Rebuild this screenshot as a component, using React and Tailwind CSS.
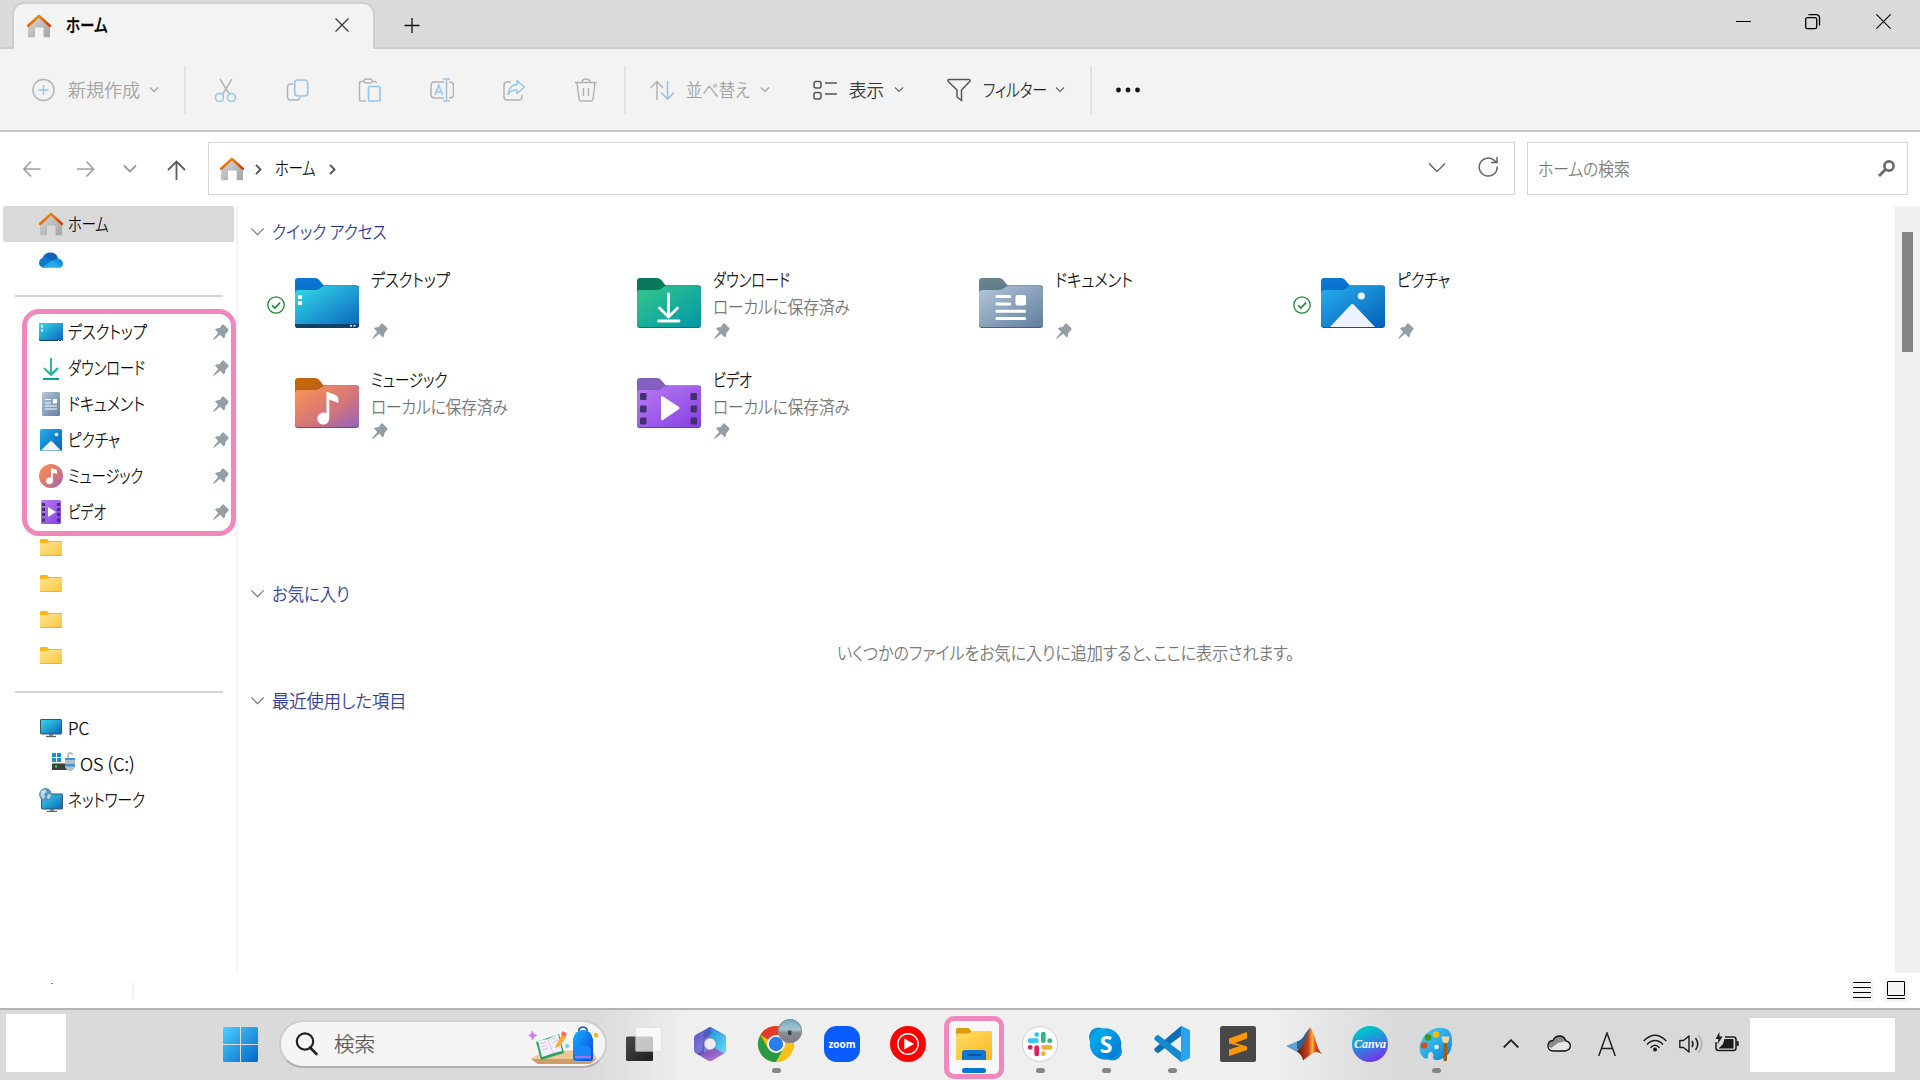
import React, { useLayoutEffect, useRef, useState } from "react";

const FONT = "font-['Noto_Sans_CJK_JP','Noto_Sans',sans-serif]";

/* Text condensed to a given width, as UI fonts with narrow kana are. */
function T({ children, w, className = "" }) {
  const ref = useRef(null);
  const [k, setK] = useState(1);
  useLayoutEffect(() => {
    const fit = () => ref.current && setK(w / ref.current.offsetWidth);
    fit();
    document.fonts?.ready.then(fit);
  }, [w]);
  return (
    <span className={`inline-block shrink-0 whitespace-nowrap text-left [-webkit-text-stroke:0.25px_currentColor] ${className}`} style={{ width: w }}>
      <span ref={ref} className="inline-block origin-left [font-feature-settings:'palt']" style={{ transform: `scaleX(${k})` }}>
        {children}
      </span>
    </span>
  );
}

function Svg({ w, h = w, vb, className = "", children }) {
  return (
    <svg width={w} height={h} viewBox={vb || `0 0 ${w} ${h}`} fill="none" className={`block shrink-0 ${className}`}>
      {children}
    </svg>
  );
}

function Gradients() {
  const list = [
    ["gHome", "#d9d9d9", "#a3a3a3"], ["gRoof", "#f39a12", "#d83b01"],
    ["gDesk", "#35dcea", "#0a63bd"], ["gDown", "#34c98b", "#0096a8"],
    ["gDoc", "#b4c6da", "#617f9f"], ["gPic", "#26aeee", "#0560b6"],
    ["gVid", "#b87cf6", "#8540e0"],
    ["gYel", "#ffe596", "#fcc73a"], ["gYel2", "#ffdc63", "#fdbb22"],
    ["gWin", "#4fd0ff", "#0067c8"], ["gBag", "#18b4ff", "#0a3fdc"],
    ["gTabBlue", "#0a7bd8", "#0564bb"], ["gTabBrown", "#cb6808", "#aa5a20"],
    ["gTabSlate", "#6a8791", "#4e6d78"], ["gSkype", "#00b7f0", "#0072d4"],
    ["gPaint", "#4fd4f8", "#0880d4"], ["gDark", "#4a4a4a", "#1d1d1d"],
    ["gOffR", "#1d7fd0", "#5fe0fa"], ["gOffL", "#5a55c4", "#a69af0"], ["gOffB", "#6a48a4", "#c07ee4"],
  ];
  return (
    <svg width="0" height="0" className="absolute">
      <defs>
        {list.map(([id, a, b]) => (
          <linearGradient key={id} id={id} x1="0" y1="0" x2="1" y2="1">
            <stop stopColor={a} />
            <stop offset="1" stopColor={b} />
          </linearGradient>
        ))}
        <linearGradient id="gMus" x1="0" y1="0" x2="1" y2="1">
          <stop stopColor="#ff9350" />
          <stop offset=".6" stopColor="#d2747c" />
          <stop offset="1" stopColor="#9064bc" />
        </linearGradient>
        <linearGradient id="gCanva" x1=".3" y1="0" x2=".7" y2="1">
          <stop offset=".1" stopColor="#00c4cc" />
          <stop offset=".5" stopColor="#2c87dc" />
          <stop offset="1" stopColor="#7d2ae8" />
        </linearGradient>
        <linearGradient id="gPhoto" x1="0" y1="0" x2="0" y2="1">
          <stop stopColor="#6ba6c8" />
          <stop offset=".45" stopColor="#a9c2cc" />
          <stop offset=".55" stopColor="#8a8f92" />
          <stop offset="1" stopColor="#777b80" />
        </linearGradient>
        <linearGradient id="gMat" x1="0" y1="0" x2="1" y2="0">
          <stop stopColor="#5c1a12" />
          <stop offset=".45" stopColor="#c8401a" />
          <stop offset=".62" stopColor="#ffb03a" />
          <stop offset=".75" stopColor="#d8481e" />
          <stop offset="1" stopColor="#b02418" />
        </linearGradient>
      </defs>
    </svg>
  );
}

const Home = ({ className = "" }) => (
  <Svg w={24} className={className}>
    <path d="M1 11.5 12 1.5 23 11.5V22.6Q23 23.3 22 23.3H16.6V14.5Q16.6 13.4 15.5 13.4H9.2Q8 13.4 8 14.5V23.3H2Q1 23.3 1 22.6Z" fill="url(#gHome)" />
    <path d="M1.2 11.8 12 1.9 22.8 11.8" stroke="url(#gRoof)" strokeWidth="2.6" strokeLinecap="round" strokeLinejoin="round" />
  </Svg>
);

const Chev = ({ w = 8, h = 5, sw = 1.2, className = "" }) => (
  <Svg w={w} h={h} vb="0 0 16 9" className={`overflow-visible ${className}`}>
    <path d="M0 .5 8 8.5 16 .5" stroke="currentColor" strokeWidth={sw} vectorEffect="non-scaling-stroke" />
  </Svg>
);

const Pin = () => (
  <Svg w={16} className="text-[#939ea5]">
    <path d="M9.3.5Q10 0 10.8.7L15.3 5.1Q16 6 15.3 6.6L14 8.2 12.4 10 12 13 10.8 14.6 7.2 10.8 1 15.8 0 15.2 5.2 8.9 2 5.6 3.4 4.5 6.8 3.9Z" fill="currentColor" />
  </Svg>
);

const Check = () => (
  <Svg w={18}>
    <circle cx="9" cy="9" r="8.2" stroke="#1d8a35" strokeWidth="1.3" />
    <path d="m5 9.2 2.8 2.8 5.3-5.4" stroke="#1d8a35" strokeWidth="1.6" />
  </Svg>
);

const Note = () => <path d="M31.5 13.5 40.5 17Q43.3 18 43.3 20.5V25L34.3 21.5V40.5A6 6 0 1 1 31.5 35.5Z" fill="#fff" />;

/* 64x50 folder: a tinted tab behind a gradient face */
function BigFolder({ kind }) {
  const face = { desk: "gDesk", down: "gDown", doc: "gDoc", pic: "gPic", music: "gMus", video: "gVid" }[kind];
  const tab = { desk: "url(#gTabBlue)", down: "#087a5b", doc: "url(#gTabSlate)", pic: "url(#gTabBlue)", music: "url(#gTabBrown)", video: "#8360bd" }[kind];
  const foot = { desk: "#0b4266", down: "#08716b", doc: "#4b627c", pic: "#0650a0", music: "#704b79", video: "#6a39b0" }[kind];
  return (
    <Svg w={64} h={50}>
      <path d="M0 3Q0 0 3 0H20Q22.5 0 24 1.8L28.5 7.2H61Q64 7.2 64 10V20H0Z" fill={tab} />
      <path d="M0 15Q0 12 3 12H20Q23 12 25 10.3L27 8.8Q28 8 30 8H61Q64 8 64 11V47Q64 50 61 50H3Q0 50 0 47Z" fill={foot} />
      <path d="M0 15Q0 12 3 12H20Q23 12 25 10.3L27 8.8Q28 8 30 8H61Q64 8 64 11V46Q64 49 61 49H3Q0 49 0 46Z" fill={`url(#${face})`} />
      {kind === "desk" && (
        <>
          <path d="M0 46H64V47Q64 50 61 50H3Q0 50 0 47Z" fill="#0b4266" />
          <path d="M3 17h4v4H3zM3 23h4v4H3zM55 47h2v1.5h-2zM58.500 47h2v1.5h-2z" fill="#fff" />
        </>
      )}
      {kind === "down" && <path d="M31.500 16V39M22.500 30 31.500 39 40.500 30M21.500 43H42" stroke="#fff" strokeWidth="2.8" strokeLinecap="round" strokeLinejoin="round" />}
      {kind === "doc" && (
        <g fill="#fff">
          <rect x="16.500" y="17" width="15.500" height="3" rx="1" /><rect x="16.500" y="24.500" width="15.500" height="3" rx="1" />
          <rect x="36.500" y="17" width="10.500" height="10.500" rx="2" />
          <rect x="16.500" y="31.700" width="30.500" height="3" rx="1" /><rect x="16.500" y="39" width="30.500" height="3" rx="1" />
        </g>
      )}
      {kind === "pic" && (
        <>
          <circle cx="40.300" cy="18" r="3.600" fill="#eaf5fb" />
          <path d="M9 49 29.500 27Q31.300 25 33.100 27L54 49Z" fill="#edf2ff" />
        </>
      )}
      {kind === "music" && <Note />}
      {kind === "video" && (
        <>
          {[15, 27.500, 39.500].map((y) => (
            <g key={y} fill="#43306f">
              <rect x="3" y={y} width="6.500" height="7" rx="1.300" /><rect x="53.500" y={y} width="6.500" height="7" rx="1.300" />
            </g>
          ))}
          <path d="M24 19.500Q24 17 26 18.500L42 29Q43.300 30 42 31L26 42Q24 43 24 41Z" fill="#fff" />
        </>
      )}
    </Svg>
  );
}

const SMALL = {
  home: <Home />,
  cloud: (
    <Svg w={24}>
      <path d="M3 13Q4 5 11 4.500 17 4 19 10L12 16Z" fill="#0b64b9" />
      <path d="M5 19.800Q0 19 0 14.500 1 9.500 6 9.500L15 13 8 19.800Z" fill="#0d77d2" />
      <path d="M13 13Q17 9.500 20 10.500 24 12 24 16 23 19.800 20 19.800Z" fill="#1590df" />
      <path d="M3.500 19Q7 16 14 12.500L22.500 18.500Q21 19.800 20 19.800H6Z" fill="#28a8ea" />
    </Svg>
  ),
  desk: (
    <Svg w={24}>
      <rect y="3" width="24" height="18" rx="1.200" fill="#0b4a75" />
      <rect y="3" width="24" height="17" rx="1.200" fill="url(#gDesk)" />
      <path d="M2 5.500h2v2H2zM2 9.500h2v2H2zM19 20h1v1h-1zM22 20h1v1h-1z" fill="#fff" />
    </Svg>
  ),
  down: (
    <Svg w={24}>
      <path d="M5 12 12 18.800 19 12" stroke="url(#gDown)" strokeWidth="2" />
      <path d="M12 2V18.500" stroke="#2cba8f" strokeWidth="2" />
      <path d="M4 23H20" stroke="#0ca498" strokeWidth="2" />
    </Svg>
  ),
  doc: (
    <Svg w={24}>
      <rect x="3" width="18" height="24" rx="1.500" fill="url(#gDoc)" />
      <path d="M6 7.500h6M6 11h6M6 14h12M6 17h12" stroke="#fff" strokeWidth="1" />
      <path d="M14 7h4v4.500h-4z" fill="#fff" />
    </Svg>
  ),
  pic: (
    <Svg w={24}>
      <rect x="1" y="1" width="22" height="22" rx="1.500" fill="url(#gPic)" />
      <path d="M2 22.500 11 13.500Q12 12.500 13 13.500L22 22.500Z" fill="#f1f5ff" />
      <circle cx="17.500" cy="6.500" r="1.800" fill="#fff" />
    </Svg>
  ),
  music: (
    <Svg w={24}>
      <circle cx="12" cy="12" r="12" fill="url(#gMus)" />
      <path d="M12 4 18 6V10L14 8.700V17A3.500 3.500 0 1 1 12 13.700Z" fill="#fff" />
    </Svg>
  ),
  video: (
    <Svg w={24}>
      <rect x="2" width="20" height="24" rx="1.500" fill="url(#gVid)" />
      {[3, 8, 13, 18.500].map((y) => (
        <path key={y} d={`M3 ${y}h3v3h-3zM18 ${y}h3v3h-3z`} fill="#43306f" />
      ))}
      <path d="M9 7 17 12 9 17Z" fill="#fff" />
    </Svg>
  ),
  folder: (
    <Svg w={24}>
      <path d="M1 4Q1 3 2 3H8L10 5H23V8H1Z" fill="#fbb713" />
      <path d="M1 8Q1 7 2 7H8L10 6H23V19Q23 20 22 20H2Q1 20 1 19Z" fill="url(#gYel)" />
      <path d="M1.500 19.500H22.500" stroke="#e9b13a" strokeWidth="1" />
    </Svg>
  ),
  pc: (
    <Svg w={24}>
      <path d="M10 18h4v3h-4z" fill="#8c9499" />
      <path d="M7 20.500H17" stroke="#54606a" strokeWidth="1.300" />
      <rect x="1.500" y="3.500" width="21" height="14.500" rx=".5" fill="url(#gDesk)" stroke="#3f5566" />
    </Svg>
  ),
  os: (
    <Svg w={24}>
      <path d="M1 1h4v4H1zM6 1h4v4H6zM1 6h4v4H1zM6 6h4v4H6z" fill="#1490df" />
      <path d="M3 11H22V14H1Z" fill="#e3e5e8" />
      <rect x="1" y="11.500" width="21" height="6.500" rx=".6" fill="#404040" />
      <rect x="4" y="13.500" width="2" height="2" fill="#3ce03c" />
      <path d="M17 6V3Q17 .8 19 .8T21.300 3" stroke="#aab6c0" strokeWidth="1.600" />
      <path d="M14 6H24V15Q22 19 19 19T14 15Z" fill="#b4bdc6" />
      <path d="M14 6H24V8H14zM14 12H24V14.500H14z" fill="#3b95d8" />
    </Svg>
  ),
  net: (
    <Svg w={24}>
      <path d="M11 21h4v3h-4z" fill="#8c9499" />
      <path d="M8 23.500H18" stroke="#54606a" strokeWidth="1.300" />
      <rect x="2.500" y="6" width="21" height="15" rx=".5" fill="url(#gDesk)" stroke="#3f5566" />
      <circle cx="6.500" cy="6.500" r="6.400" fill="#5596bd" />
      <path d="M2 3 6 1.500 8 4 5 6 6 9 4 11 1.500 7ZM9 6l3 1-2 4-2-1Z" fill="#c3dce9" />
    </Svg>
  ),
};

const NAV = [
  ["home", "ホーム", 41], ["cloud"], ["sep"],
  ["desk", "デスクトップ", 79, true], ["down", "ダウンロード", 77, true], ["doc", "ドキュメント", 77, true],
  ["pic", "ピクチャ", 52, true], ["music", "ミュージック", 75, true], ["video", "ビデオ", 38, true],
  ["folder"], ["folder"], ["folder"], ["folder"], ["sep"],
  ["pc", "PC", 21], ["os", "OS (C:)", 55], ["net", "ネットワーク", 77],
];

function Sidebar() {
  return (
    <aside className="relative h-[767px] w-[238px] shrink-0 border-r-2 border-[#f5f5f5]">
      {NAV.map(([icon, label, w, pin], i) =>
        icon === "sep" ? (
          <div key={i} className="flex h-9 items-center pl-[15px]">
            <div className="h-0.5 w-52 bg-[#d3d3d3]" />
          </div>
        ) : (
          <div key={i} className={`ml-[3px] flex h-9 w-[231px] items-center gap-[5px] rounded-[2px] ${i === 0 ? "bg-[#d9d9d9]" : ""} ${icon === "os" ? "pl-12" : "pl-9"}`}>
            {SMALL[icon]}
            {label && <T w={w} className="-mt-0.5 text-[18px] leading-9">{label}</T>}
            {pin && <span className="mr-[5px] ml-auto"><Pin /></span>}
          </div>
        )
      )}
      <div className="absolute top-[103px] left-[22px] h-[227px] w-[214px] rounded-[17px] border-[5px] border-[#f088be]" />
    </aside>
  );
}

const TILES = [
  ["desk", "デスクトップ", 79, false, true], ["down", "ダウンロード", 77, true], ["doc", "ドキュメント", 78],
  ["pic", "ピクチャ", 53, false, true], ["music", "ミュージック", 76, true], ["video", "ビデオ", 39, true],
];

const Section = ({ label, w }) => (
  <div className="flex h-9 items-center pl-[13px] text-[#1c2f91]">
    <Chev w={13} h={7} className="text-[#777]" />
    <T w={w} className="ml-2 text-[18px] leading-9">{label}</T>
  </div>
);

function Main() {
  return (
    <main className="h-[767px] grow pt-[7px]">
      <Section label="クイック アクセス" w={115} />
      <div className="mt-3 grid w-max grid-cols-[repeat(4,342px)] pl-[29px]">
        {TILES.map(([kind, name, w, local, ok]) => (
          <div key={kind} className="flex h-[100px]">
            <div className="w-[28px] pt-[35px]">{ok && <Check />}</div>
            <div className="w-[76px] pt-[17px]"><BigFolder kind={kind} /></div>
            <div className="flex flex-col pt-[5px] text-[18px] leading-[27px]">
              <T w={w}>{name}</T>
              <span className="flex h-[27px] text-[#6d6d6d]">{local && <T w={137}>ローカルに保存済み</T>}</span>
              <span className="pt-[3px] pl-px"><Pin /></span>
            </div>
          </div>
        ))}
      </div>
      <div className="mt-[114px]"><Section label="お気に入り" w={78} /></div>
      <div className="mt-[23px] flex justify-center pr-[3px] text-[18px] leading-9 text-[#6d6d6d]">
        <T w={457}>いくつかのファイルをお気に入りに追加すると、ここに表示されます。</T>
      </div>
      <div className="mt-[12px]"><Section label="最近使用した項目" w={134} /></div>
    </main>
  );
}

const G = "#b4b4b4";
const B = "#94c6ee";
const VSep = ({ className }) => <div className={`h-12 w-0.5 shrink-0 bg-[#e2e2e2] ${className}`} />;

function Toolbar() {
  return (
    <div className="flex h-[83px] items-center border-b-2 border-[#c8c8c8] bg-[#f3f3f3] text-[18px] leading-9">
      <Svg w={24} className="ml-8">
        <circle cx="11.500" cy="12" r="10.500" stroke={G} strokeWidth="1.400" />
        <path d="M11.500 7v10M6.500 12h10" stroke={B} strokeWidth="1.500" />
      </Svg>
      <T w={72} className="-mt-0.5 ml-3 text-[#a0a0a0]">新規作成</T>
      <Chev className="ml-[10px] text-[#a0a0a0]" />
      <VSep className="ml-[26px]" />
      <Svg w={24} className="ml-[28px]">
        <path d="M6 1 15.500 16.500M18 1 8.500 16.500" stroke={G} strokeWidth="1.500" />
        <circle cx="5.500" cy="19.500" r="4" stroke={B} strokeWidth="1.600" />
        <circle cx="17.500" cy="19.500" r="4" stroke={B} strokeWidth="1.600" />
      </Svg>
      <Svg w={24} className="ml-12">
        <path d="M7 6H4.500Q1.500 6 1.500 9V18.500Q1.500 22 5 22H11Q14 22 14 19" stroke={G} strokeWidth="1.500" />
        <rect x="8.700" y="2" width="13" height="16" rx="3" stroke={B} strokeWidth="1.700" />
      </Svg>
      <Svg w={24} className="ml-12">
        <path d="M6 3.500H3Q1.500 3.500 1.500 5V21.500Q1.500 23 3 23H8M14 3.500H17Q18.500 3.500 18.500 5" stroke={G} strokeWidth="1.500" />
        <rect x="6" y="1" width="8" height="4" rx="1.700" stroke={G} strokeWidth="1.400" />
        <rect x="10.500" y="8.500" width="11.500" height="14.500" rx="1.500" stroke={B} strokeWidth="1.700" />
      </Svg>
      <Svg w={24} className="ml-12">
        <path d="M14 4H4.500Q1 4 1 7.500V16.500Q1 20 4.500 20H14M19 4Q23.500 4 23.500 7.500V16.500Q23.500 20 19 20" stroke={G} strokeWidth="1.500" />
        <path d="M5 17 8.800 7 12.600 17M6 14H11.500M13 1H20M13 23H20M16.500 1V23" stroke={B} strokeWidth="1.500" />
      </Svg>
      <Svg w={24} className="ml-12">
        <path d="M9 4H5Q2 4 2 7V19Q2 22 5 22H17Q20 22 20 19V17" stroke={G} strokeWidth="1.500" />
        <path d="M15 2.500 22.500 9 15 15.500V12Q9 11.500 6 16.500 7 7 15 6.500Z" stroke={B} strokeWidth="1.500" strokeLinejoin="round" />
      </Svg>
      <Svg w={24} className="ml-12">
        <path d="M1 4.500H23M8 4.500Q8 1 12 1T16 4.500M3 4.500 5 21Q5.300 23 7 23H17Q18.700 23 19 21L21 4.500M9.500 10V18M14.500 10V18" stroke={G} strokeWidth="1.500" />
      </Svg>
      <VSep className="ml-[26px]" />
      <Svg w={24} className="ml-6">
        <path d="M7 22V3.500M.5 10 7 3.500 13 10" stroke={G} strokeWidth="1.500" />
        <path d="M17.500 3V21M11 14.500 17.500 21 24 14.500" stroke={B} strokeWidth="1.600" />
      </Svg>
      <T w={64} className="-mt-0.5 ml-3 text-[#a0a0a0]">並べ替え</T>
      <Chev className="ml-[11px] text-[#a0a0a0]" />
      <Svg w={24} className="ml-11">
        <rect x="1" y="3.500" width="7" height="6.500" rx="2" stroke="#555" strokeWidth="1.500" />
        <rect x="1" y="14.500" width="7" height="6.500" rx="2" stroke="#555" strokeWidth="1.500" />
        <path d="M12 5H24M12 16H24" stroke="#555" strokeWidth="1.500" />
      </Svg>
      <T w={35} className="-mt-0.5 ml-3 text-[#1c1c1c]">表示</T>
      <Chev className="ml-[11px] text-[#666]" />
      <Svg w={24} className="ml-11">
        <path d="M2 1.500H22Q24 2 22.500 3.800L14.500 12V22.500L10 19V12L1.500 3.800Q0 2 2 1.500Z" stroke="#555" strokeWidth="1.500" />
      </Svg>
      <T w={64} className="-mt-0.5 ml-3 text-[#1c1c1c]">フィルター</T>
      <Chev className="ml-[9px] text-[#666]" />
      <VSep className="ml-[26px]" />
      <Svg w={24} h={6} className="ml-6">
        <circle cx="2.500" cy="3" r="2.400" fill="#111" /><circle cx="12" cy="3" r="2.400" fill="#111" /><circle cx="21.500" cy="3" r="2.400" fill="#111" />
      </Svg>
    </div>
  );
}

function TitleBar() {
  return (
    <div className="flex h-[49px] border-b-2 border-[#cdcdcd] bg-[#dadada]">
      <div className="mt-[2px] ml-[12px] flex h-[47px] w-[363px] shrink-0 rounded-t-[12px] border-2 border-b-0 border-[#cfcfcf] bg-[#f3f3f3]">
        <Home className="mt-[10px] ml-[13px]" />
        <T w={42} className="mt-[2px] ml-[15px] text-[18px] leading-9 font-medium">ホーム</T>
        <Svg w={14} className="mt-[14px] ml-[227px]"><path d="M.5.500 13.500 13.500M13.500.500.500 13.500" stroke="#333" strokeWidth="1.200" /></Svg>
      </div>
      <Svg w={16} className="mt-[18px] ml-[29px]"><path d="M8 0V15M.5 7.500H15.500" stroke="#111" strokeWidth="1.300" /></Svg>
      <div className="mt-[14px] mr-[29px] ml-auto flex">
        <Svg w={15}><path d="M0 7.500H15" stroke="#000" /></Svg>
        <Svg w={16} className="ml-[54px]">
          <rect x=".7" y="3.700" width="11" height="11" rx="1.800" stroke="#000" strokeWidth="1.300" />
          <path d="M3.500.700H11Q14.500.700 14.500 4.200V11.500" stroke="#000" strokeWidth="1.300" />
        </Svg>
        <Svg w={15} className="ml-[55px]"><path d="M.3.300 14.700 14.700M14.700.300.300 14.700" stroke="#111" strokeWidth="1.200" /></Svg>
      </div>
    </div>
  );
}

const Crumb = ({ className }) => <Svg w={7} h={11} className={className}><path d="M1 .8 5.500 5.500 1 10.200" stroke="#555" strokeWidth="1.900" /></Svg>;

function AddressRow() {
  return (
    <div className="flex h-[74px] pt-[10px] text-[18px] leading-9">
      <div className="flex h-[53px] w-[208px] shrink-0 items-center pl-[23px]">
        <Svg w={18} className="text-[#a0a0a0]"><path d="M17.500 9H1.500M8 1.500 1 9 8 16.500" stroke="currentColor" strokeWidth="1.700" /></Svg>
        <Svg w={18} className="ml-[36px] text-[#a0a0a0]"><path d="M0 9H16.500M9.500 1.500 16.500 9 9.500 16.500" stroke="currentColor" strokeWidth="1.700" /></Svg>
        <Chev w={12} h={7} sw={1.800} className="ml-[29px] text-[#9a9a9a]" />
        <Svg w={20} h={20} className="mt-0.5 ml-[31px]"><path d="M9.500 20V1.500M1 10 9.500 1.500 18 10" stroke="#5c5c5c" strokeWidth="1.800" /></Svg>
      </div>
      <div className="flex h-[53px] w-[1307px] items-center border border-[#d6d6d6] bg-white">
        <Home className="ml-[11px]" />
        <Crumb className="mt-0.5 ml-[11px]" />
        <T w={41} className="-mt-[3px] ml-[13px]">ホーム</T>
        <Crumb className="mt-0.5 ml-[13px]" />
        <Chev w={16} h={9} sw={1.400} className="mb-0.5 ml-auto text-[#666]" />
        <Svg w={20} className="mr-[16px] mb-1 ml-[33px]">
          <path d="M19.200 9.500A9 9 0 1 1 15.500 2.800L18.500 5.200M19 0V5.500H13" stroke="#666" strokeWidth="1.500" />
        </Svg>
      </div>
      <div className="ml-3 flex h-[53px] w-[381px] items-center justify-between border border-[#d6d6d6] pr-3 pl-[10px] text-[#767676]">
        <T w={92} className="-mt-0.5">ホームの検索</T>
        <Svg w={17}><circle cx="11" cy="6" r="4.600" stroke="#6b6b6b" strokeWidth="2.700" /><path d="M7.500 9.500 1 16" stroke="#6b6b6b" strokeWidth="2.800" /></Svg>
      </div>
    </div>
  );
}

function StatusBar() {
  return (
    <div className="flex h-[35px] items-start pt-[5px]">
      <div className="mt-[5px] ml-[51px] h-px w-0.5 bg-[#777]" />
      <div className="mt-1 ml-[79px] h-[17px] w-0.5 bg-[#f2f2f2]" />
      <Svg w={24} className="ml-auto rounded-[2px] bg-[#f5f5f5]"><path d="M3 4.500h18M3 9.500h18M3 14.500h18M3 19.500h18" stroke="#000" /></Svg>
      <Svg w={24} className="mr-3 ml-[10px] rounded-[2px] bg-[#f5f5f5]"><rect x="3.500" y="3.500" width="17" height="14" rx=".5" stroke="#000" /><path d="M3 20.500h18" stroke="#000" /></Svg>
    </div>
  );
}

const APPS = [
  ["taskview", false,
    <><rect y="10.500" width="27" height="24.500" rx="1.500" fill="url(#gDark)" /><rect x="9.500" y="1.500" width="26" height="24" rx="1" fill="#fff" opacity=".72" stroke="#d4d4d4" strokeWidth=".6" /></>],
  ["office", false,
    <><path d="M17 1.500Q18 .5 19.500 1.500L32 8.500Q34 9.700 34 12V24Q34 26.300 32 27.500L20 34.500Q18 35.500 16 34.500L4 27.500Q2 26.300 2 24V12Q2 9.700 4 8.500Z" fill="url(#gOffL)" />
      <path d="M14 3.500 18 1 32 8.500Q34 9.700 34 12V24Q34 27 30 26.500L24 23V15L14 9Z" fill="url(#gOffR)" />
      <path d="M7 28.500 22 22 30 26.500Q31.500 27.500 33 26.500L20 34.500Q18 35.500 16 34.500Z" fill="url(#gOffB)" />
      <path d="M12 5 17 1.500Q20 2 19 8L12 13V27L8 29.500 4 27.500Q11 27 11 20Z" fill="#5450ba" opacity=".75" />
      <circle cx="18" cy="18" r="5.700" fill="#ececec" /></>],
  ["chrome", true,
    <><circle cx="18" cy="18" r="18" fill="#fbbc05" />
      <path d="M18 18 2.400 9A18 18 0 0 1 33.600 9H18Z" fill="#e33b2e" />
      <path d="M2.400 9A18 18 0 0 0 18 36L25.800 22.500 10.200 22.500Z" fill="#2a9a47" />
      <path d="M18 36A18 18 0 0 0 33.600 9H18L25.800 22.500Z" fill="#fbc116" />
      <circle cx="18" cy="18" r="9" fill="#fff" /><circle cx="18" cy="18" r="7.200" fill="#2b7de9" />
      <circle cx="32" cy="5" r="12" fill="url(#gPhoto)" /><circle cx="32" cy="5" r="11.500" stroke="#858b8f" />
      <path d="M30 4.500h3.500v4.500h-3.500z" fill="#354554" /></>],
  ["zoom", false, <rect width="36" height="36" rx="12.500" fill="#0b5cff" />],
  ["music", false,
    <><circle cx="18" cy="18" r="18" fill="#f00" /><circle cx="18" cy="18" r="10.200" stroke="#fff" strokeWidth="1.400" /><path d="M14.300 12.500 24 18 14.300 23.500Z" fill="#fff" /></>],
  ["files", "active",
    <><path d="M0 3.500Q0 2 1.500 2H11Q12.500 2 13.500 3L15.500 5V10H0Z" fill="#dd9b06" />
      <path d="M0 9Q0 7.500 1.500 7.500H11Q13 7.500 14.500 6.300L15.500 5.500Q16 5 17 5H34.500Q36 5 36 6.500V34H0Z" fill="url(#gYel2)" />
      <path d="M6 34V27Q6 24 9 24H27Q30 24 30 27V34Z" fill="#1177cf" /><path d="M11 29H25" stroke="#084a93" strokeWidth="1.500" /></>],
  ["slack", true,
    <><circle cx="18" cy="18" r="17.500" fill="#fff" stroke="#cfcfcf" strokeWidth="1" />
      <g strokeWidth="4.700" strokeLinecap="round"><path d="M8 14.700H14.500M14.700 8.500v.1" stroke="#36c5f0" /><path d="M21.300 8V14.700M27.700 14.700h.1" stroke="#2eb67d" /><path d="M28 21.300H21.500M21.300 27.600v.1" stroke="#ecb22e" /><path d="M14.700 28V21.500M8.300 21.300h-.1" stroke="#e01e5a" /></g></>],
  ["skype", true,
    <><circle cx="10.500" cy="11" r="9.500" fill="#0a8fd8" /><circle cx="24.500" cy="25" r="9.500" fill="#0a8fd8" /><circle cx="17.500" cy="18" r="15.700" fill="url(#gSkype)" /></>],
  ["code", true,
    <><path d="M27 0 36 4.500 27 10 5 26.500Q3.500 27.500 2 26L.5 24.500Q-.3 23 1 22Z" fill="#0a6fb5" />
      <path d="M27 36 36 31.500 27 26 5 9.500Q3.500 8.500 2 10L.5 11.500Q-.3 13 1 14Z" fill="#1488d0" />
      <path d="M27 0 34.500 3.400Q36 4.200 36 6V30Q36 32 34.500 32.800L27 36Z" fill="#25a4ef" /></>],
  ["sublime", false,
    <><rect width="36" height="36" rx="2.500" fill="#484848" /><path d="M9 12.500 27 6V12.500L15 17 27 20.500V24L9 30V23.500L20 20 9 17.500Z" fill="#ff9800" /></>],
  ["matlab", false,
    <><path d="M0 20 11 15.500 17 21.500 11 26Z" fill="#5e9ed0" /><path d="M11 15.500Q16 14 19 8L24 1.500 20 16 14 25 11 22Z" fill="#2e658e" />
      <path d="M24 1.500Q27 4 29.500 14T36 28Q31 25 28 26.500T17 34.500Q16 29 11 25.500 18 21 24 1.500Z" fill="url(#gMat)" /></>],
  ["canva", false, <circle cx="18" cy="18" r="18" fill="url(#gCanva)" />],
  ["paint", true,
    <><path d="M19 2Q33 0 34 13 35 27 26 32 15 37 15 31 16 27 13 25.500 9 27 10 31 10 34 6 32 0 27 2 18 7 4 19 2Z" fill="url(#gPaint)" />
      <circle cx="10" cy="11.500" r="3.300" fill="#3c9a10" /><circle cx="18" cy="8.500" r="3.300" fill="#f5bd07" /><circle cx="6" cy="19.500" r="3.300" fill="#d8501c" /><circle cx="18.500" cy="21" r="2.300" fill="#e7f3fb" />
      <path d="M25.500 16H29V34.500Q27 36 25.500 34.500Z" fill="#a45d0c" /><path d="M23.500 10.500H31.500Q31 16 29 17H26Q24 16 23.500 10.500Z" fill="#f2d2a0" /></>],
];

function Taskbar() {
  return (
    <div className="flex h-[72px] border-t-2 border-[#b4b4b4] bg-[linear-gradient(90deg,#dadada_0,#dadada_590px,#efefef_690px,#efefef_1270px,#d9d9d9_1400px,#d9d9d9_100%)]">
      <div className="mt-1 ml-[6px] h-[58px] w-[60px] shrink-0 bg-white" />
      <Svg w={35} className="mt-[17px] ml-[157px]">
        <path d="M0 1.500Q0 0 1.500 0H17V17H0ZM18 0H33.500Q35 0 35 1.500V17H18ZM0 18H17V35H1.500Q0 35 0 33.500ZM18 18H35V33.500Q35 35 33.500 35H18Z" fill="url(#gWin)" />
      </Svg>
      <div className="mt-[10px] ml-[21px] flex h-[48px] w-[328px] shrink-0 items-center rounded-full border-2 border-[#cdcdcd] border-b-[#b0b0b0] bg-[#f5f5f5]">
        <Svg w={24} className="ml-[14px]"><circle cx="10" cy="9.500" r="8.200" stroke="#222" strokeWidth="2.200" /><path d="M15 15.500 21.500 22" stroke="#222" strokeWidth="2.700" strokeLinecap="round" /></Svg>
        <T w={41} className="ml-[15px] text-[20px] leading-9 text-[#555]">検索</T>
        <Svg w={72} h={38} className="mt-1 mr-[5px] ml-auto overflow-visible">
          <path d="M3 32 16 24 64 23 69 31 62 37H10Z" fill="#edc797" /><path d="M3 32H69L62 37H10Z" fill="#cf9e68" />
          <path d="M4 3 6 7 10 8 6 10 5 14 3 10 0 8 3 7Z" fill="#dc74f6" />
          <path d="M8 15 31 7 36 26 13 33Z" fill="#29a65b" /><path d="M10 14 20 12 30 7 34 24 26 26 14 30Z" fill="#f5f0ff" />
          <path d="M20 12 25 26M12 17l6-2M13 20l6-2M14 23l6-2M23 13l5-3M24 16l6-3" stroke="#c9bde0" strokeWidth=".8" />
          <path d="M28 18 34 7 38 10 32 19 27 21Z" fill="#ffad33" /><path d="M33 7 35 4 39 7 37 10Z" fill="#ff654d" />
          <path d="M51 4V2Q55-2 59 2V4" stroke="#244fb2" strokeWidth="1.600" />
          <path d="M45 12Q47 3 55 3T65 12V31Q65 34 62 34H48Q45 34 45 31Z" fill="url(#gBag)" /><path d="M47 24Q48 18 55 18T63 24V32H47Z" fill="#1687f8" /><path d="M47 30H63" stroke="#a66cf5" strokeWidth="2" />
          <circle cx="68" cy="8" r="2.300" fill="#ffae19" /><circle cx="39" cy="19" r="2" fill="#58d4ee" />
        </Svg>
      </div>
      <div className="ml-[7px] flex shrink-0 gap-[6px]">
        {APPS.map(([id, run, art]) => (
          <div key={id} className="relative flex h-[70px] w-[60px] flex-col items-center">
            {run === "active" && <div className="absolute top-[6px] left-0 h-[63px] w-[60px] rounded-[10px] border-[5px] border-[#f088be] bg-[#f8f8f8]" />}
            <div className="relative mt-4 h-9 w-9">
              <Svg w={36} className="overflow-visible">{art}</Svg>
              {id === "zoom" && <span className="absolute inset-0 flex items-center justify-center font-['Open_Sans',sans-serif] text-[10px] leading-none font-bold text-white">zoom</span>}
              {id === "skype" && <span className="absolute inset-0 flex items-center justify-center font-['Open_Sans',sans-serif] text-[23px] leading-none font-bold text-white">S</span>}
              {id === "canva" && <span className="absolute inset-0 flex items-center justify-center font-['Liberation_Serif',serif] text-[12px] leading-none font-bold text-white italic">Canva</span>}
            </div>
            {run && <div className={`relative mt-[6px] h-[5px] rounded-full ${run === "active" ? "w-6 bg-[#0078d4]" : "w-[9px] bg-[#868686]"}`} />}
          </div>
        ))}
      </div>
      <div className="ml-auto flex h-[67px] items-center">
        <Svg w={16} h={9}><path d="M.7 8.500 8 1.200 15.300 8.500" stroke="#1c1c1c" strokeWidth="1.800" /></Svg>
        <Svg w={24} h={17} className="ml-7">
          <path d="M6.500 16Q1 16 1 11T6 5.500Q8 1 12.500 1T19 6Q23.300 7 23.300 11T18 16Z" fill="#e5e5e5" />
          <path d="M2 8 6 5.500Q8 1 12.500 1T19 6L11 8 4 13 1 11Z" fill="#8b8b8b" />
          <path d="M6.500 16Q1 16 1 11T6 5.500Q8 1 12.500 1T19 6Q23.300 7 23.300 11T18 16Z" stroke="#111" strokeWidth="1.300" />
        </Svg>
        <Svg w={18} h={24} className="ml-[27px]"><path d="M.7 24 9 1 17.300 24M3.500 16.500H14.500" stroke="#222" strokeWidth="1.500" /></Svg>
        <Svg w={24} h={18} className="mb-0.5 ml-[27px]">
          <path d="M.7 7Q12-4.500 23.300 7M4 10.500Q12 2.500 20 10.500M7.500 13.700Q12 9 16.500 13.700" stroke="#1c1c1c" strokeWidth="1.500" /><circle cx="12" cy="15.500" r="2" fill="#1c1c1c" />
        </Svg>
        <Svg w={24} h={20} className="ml-3">
          <path d="M.8 6.500H4.500L10 2V18L4.500 13.500H.8Z" stroke="#1c1c1c" strokeWidth="1.400" strokeLinejoin="round" />
          <path d="M13 7Q15 10 13 13M16.500 4Q21 10 16.500 16" stroke="#1c1c1c" strokeWidth="1.500" /><path d="M19.500 1Q26 10 19.500 19" stroke="#ababab" strokeWidth="1.300" />
        </Svg>
        <Svg w={24} h={20} className="mb-[3px] ml-3">
          <path d="M10 5H18.500Q21 5 21 7.500V16Q21 18.500 18.500 18.500H3.500Q1 18.500 1 16V10" stroke="#1c1c1c" strokeWidth="1.500" />
          <path d="M9.500 7H18.500V16.500H3.500L8 12ZM21.500 9H23.500Q24 12 23.500 14H21.500Z" fill="#1c1c1c" /><path d="M4.500 0 .5 7H3.500L2.500 12.500 7.500 4.500H4.500Z" fill="#1c1c1c" />
        </Svg>
      </div>
      <div className="mt-2 mr-[25px] ml-[11px] h-[54px] w-[145px] shrink-0 bg-white" />
    </div>
  );
}

export default function App() {
  return (
    <div className={`flex h-[1080px] w-[1920px] flex-col overflow-hidden bg-white text-black ${FONT} font-light`}>
      <Gradients />
      <TitleBar />
      <Toolbar />
      <AddressRow />
      <div className="flex h-[767px]">
        <Sidebar />
        <Main />
        <div className="w-[25px] shrink-0 bg-[#f0f0f0] pt-[26px] pl-[7px]">
          <div className="h-[120px] w-[11px] bg-[#858585]" />
        </div>
      </div>
      <StatusBar />
      <Taskbar />
    </div>
  );
}
